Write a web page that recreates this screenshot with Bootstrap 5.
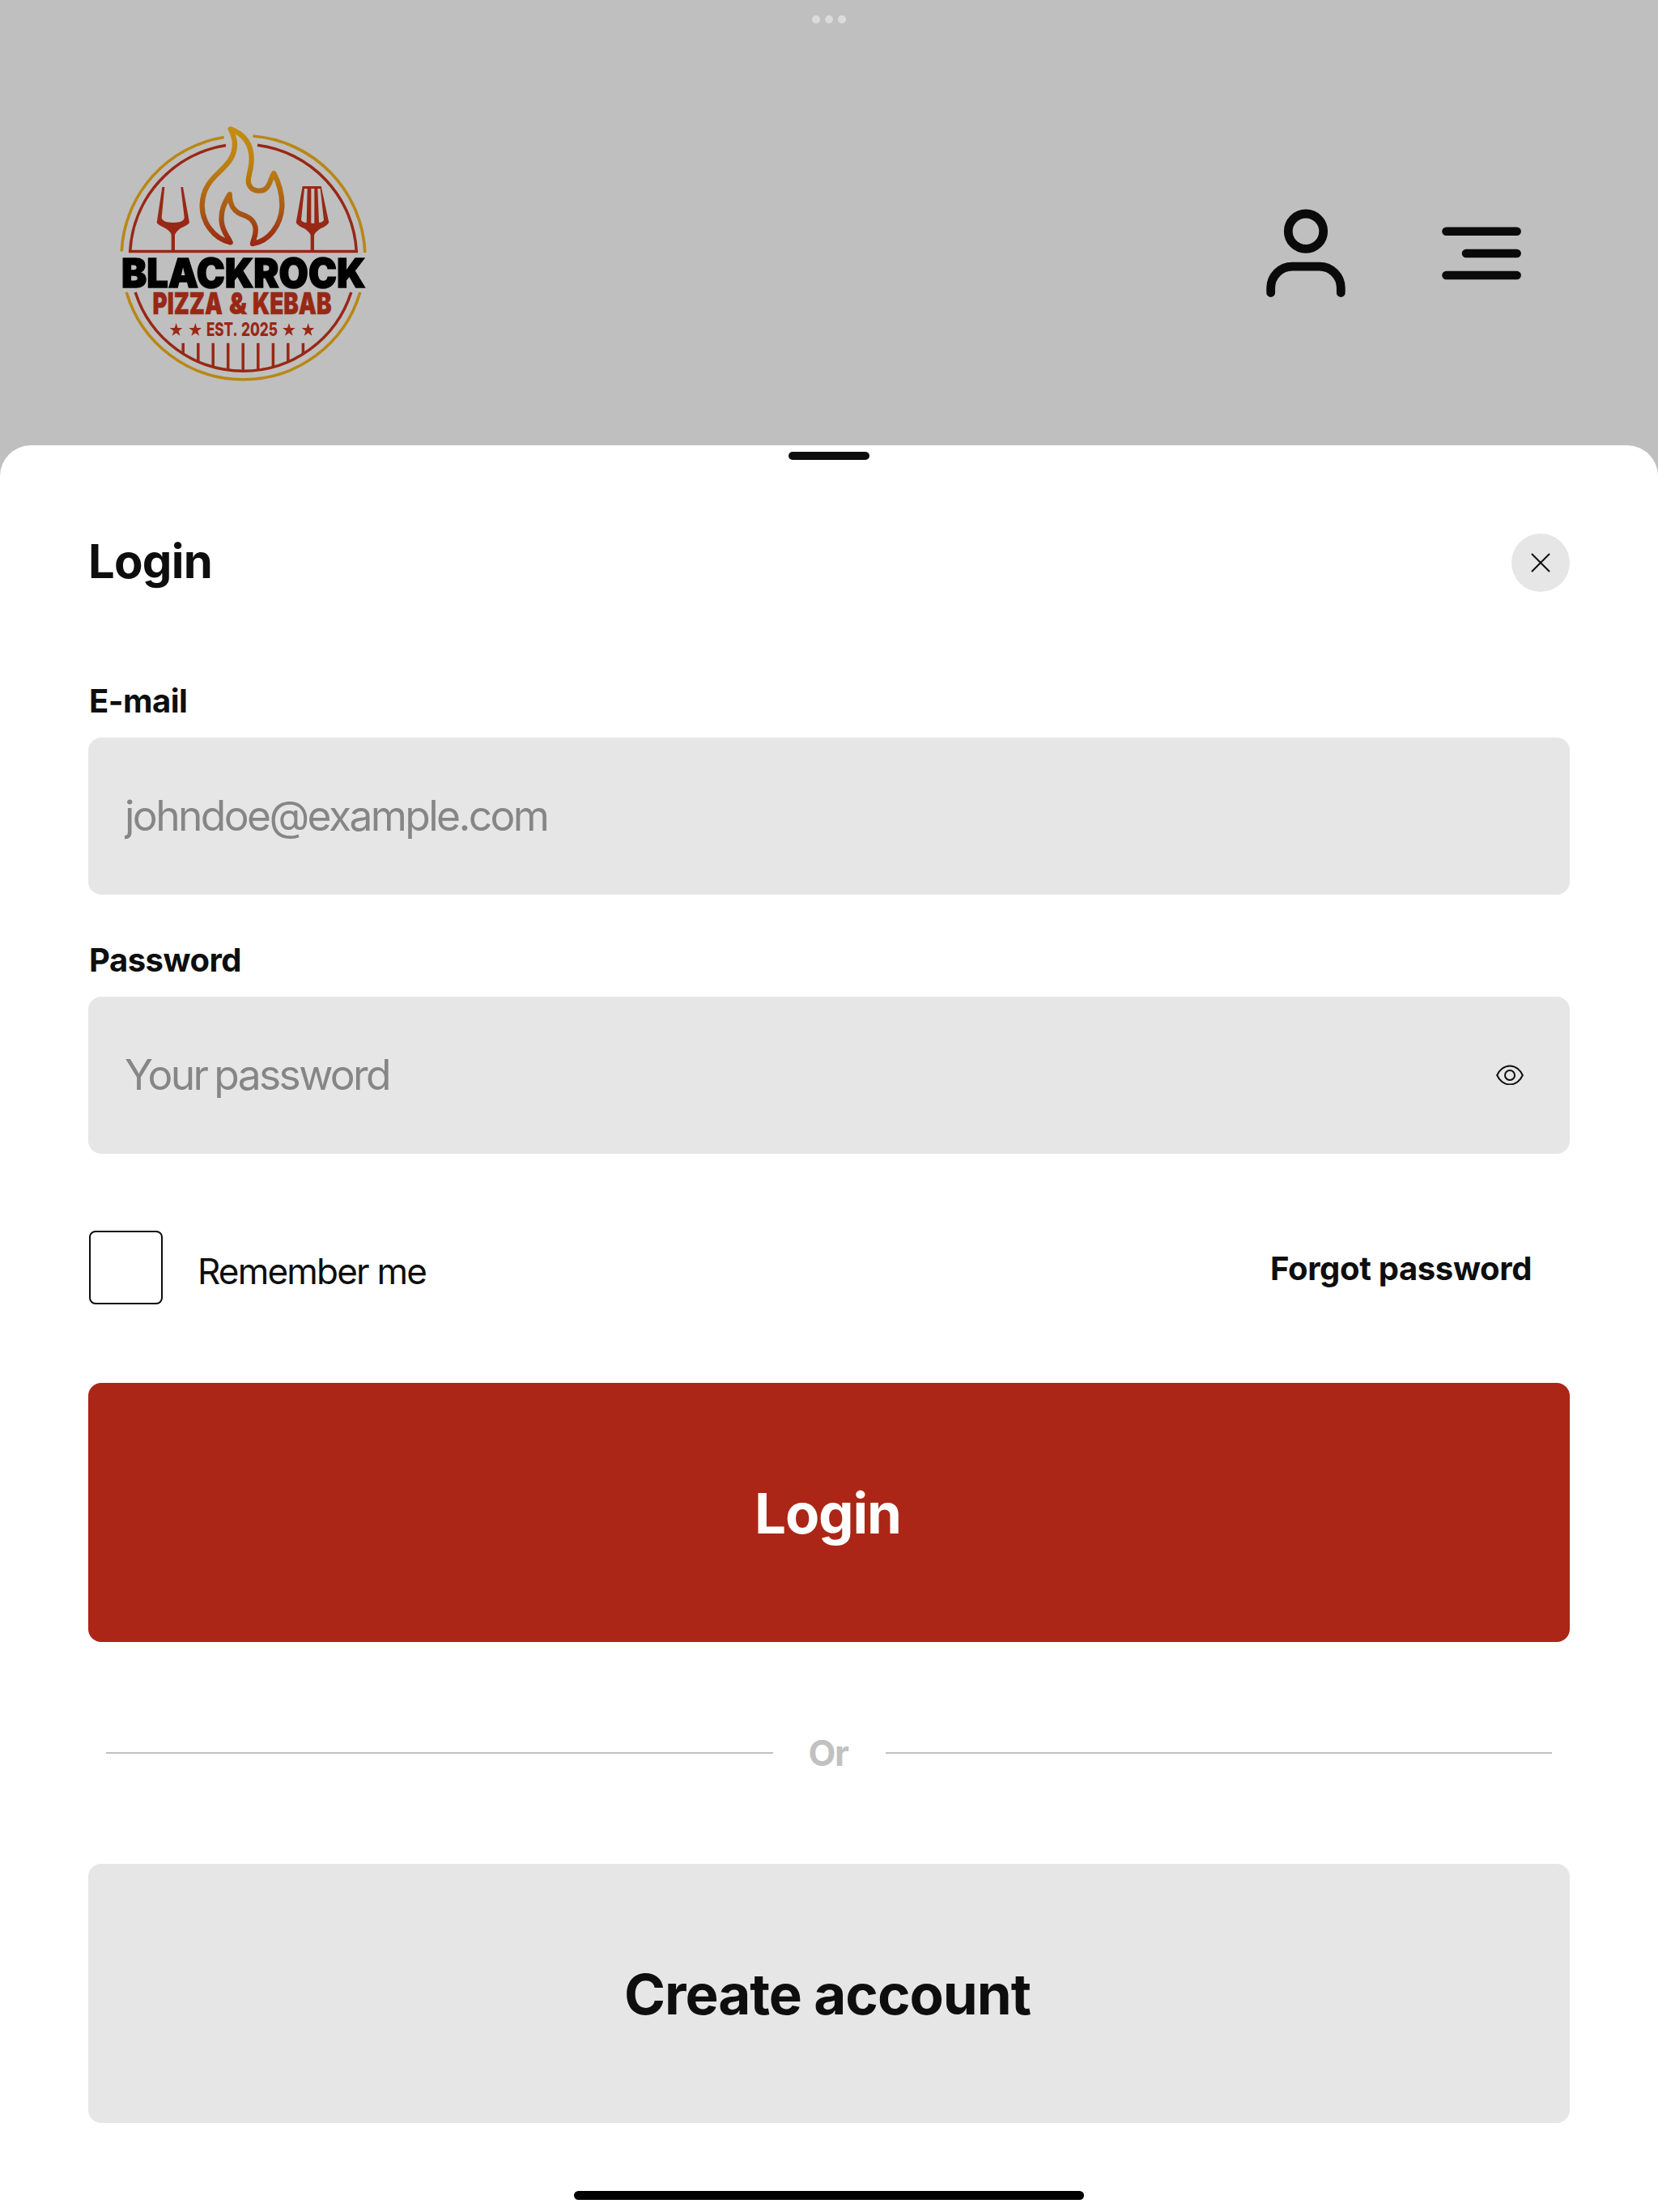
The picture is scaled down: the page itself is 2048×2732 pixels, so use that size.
<!DOCTYPE html>
<html lang="en">
<head>
    <meta charset="UTF-8">
    <title>Login</title>
    <link href="https://cdn.jsdelivr.net/npm/bootstrap@5.3.3/dist/css/bootstrap.min.css" rel="stylesheet">
    <style>
        body {
            font-family: Inter, "Liberation Sans", sans-serif;
            color: #0e0e0e;
            background: #bfbfbf;
            height: 2732px;
            overflow: hidden;
        }

        /* Dimmed page behind the sheet */
        .page-top {
            height: 550px;
            padding: 19px 164px 0 130px;
        }
        .window-dots {
            gap: 6px;
            height: 10px;
            margin-right: -34px;
        }
        .window-dots span {
            width: 10px;
            height: 10px;
            background: #dbdbdb;
        }
        .site-bar {
            padding-top: 111px;
        }
        .header-icons {
            gap: 110px;
            padding-top: 108px;
        }

        /* Bottom sheet */
        .login-sheet {
            height: 2182px;
            border-radius: 38px 38px 0 0;
            padding: 8px 109px 15px;
        }
        .drag-handle {
            width: 100px;
            height: 10px;
            background: #0e0e0e;
        }
        .sheet-head {
            height: 72px;
            margin-top: 91px;
        }
        .sheet-title {
            font-size: 58px;
            line-height: 68px;
            letter-spacing: -0.75px;
            padding-bottom: 4px;
        }
        .close-btn {
            width: 72px;
            height: 72px;
            background: #e6e6e6;
        }
        #loginForm {
            margin-top: 115px;
        }
        .field-group + .field-group {
            margin-top: 60px;
        }
        .field-label {
            font-size: 40px;
            line-height: 40px;
            letter-spacing: -0.5px;
            padding: 0 0 25px 1px;
        }
        .field-group + .field-group .field-label {
            margin-top: 1px;
        }
        .field-box {
            height: 194px;
            background: #e6e6e6;
            border-radius: 16px;
            padding: 0 57px 2px 45px;
        }
        .field-box .form-control {
            font-size: 51.5px;
            line-height: 70px;
            letter-spacing: -2.6px;
            word-spacing: -3px;
        }
        .field-box .form-control::placeholder {
            color: #868686;
            opacity: 1;
        }
        .options-row {
            height: 91px;
            margin-top: 95px;
            padding: 0 47px 0 1px;
        }
        .options-row .form-check-input {
            width: 91px;
            height: 91px;
            border: 2px solid #0e0e0e;
            border-radius: 8px;
        }
        .remember-label {
            font-size: 44px;
            letter-spacing: -1.8px;
            padding: 9px 0 0 43px;
        }
        .forgot-link {
            font-size: 40px;
            letter-spacing: -0.35px;
            padding-top: 2px;
            color: #0e0e0e;
        }
        .big-btn {
            height: 320px;
            border-radius: 16px;
            font-size: 69px;
            line-height: 80px;
        }
        .btn-brand {
            background: #ab2616;
            color: #fff;
            letter-spacing: -1.15px;
            margin-top: 97px;
            padding: 2px 3px 0 0;
        }
        .btn-plain {
            background: #e6e6e6;
            color: #0e0e0e;
            letter-spacing: -1px;
            padding: 2px 4px 0 0;
        }
        .or-row {
            height: 274px;
            padding: 0 22px;
            color: #c1c1c1;
            font-size: 44px;
            letter-spacing: -1.5px;
        }
        .or-row span {
            width: 139px;
            padding-right: 2px;
        }
        .or-line {
            height: 2px;
            background: #c1c1c1;
        }
        .home-bar {
            width: 630px;
            height: 11px;
            background: #000;
        }
    </style>
</head>
<body>

<header class="page-top">
    <div class="window-dots d-flex justify-content-center">
        <span class="rounded-circle"></span>
        <span class="rounded-circle"></span>
        <span class="rounded-circle"></span>
    </div>
    <div class="site-bar d-flex justify-content-between">
        <svg width="340" height="340" viewBox="0 0 340 340">
            <defs>
                <linearGradient id="flame" gradientUnits="userSpaceOnUse" x1="0" y1="50" x2="0" y2="490">
                    <stop offset="0" stop-color="#c38e10"/>
                    <stop offset="0.35" stop-color="#bc7f11"/>
                    <stop offset="0.7" stop-color="#a95a16"/>
                    <stop offset="1" stop-color="#982513"/>
                </linearGradient>
            </defs>
            <!-- rings -->
            <g fill="none" stroke="#b98714" stroke-width="3.6">
                <path d="M20.2,170.5 A150.5,150.5 0 0 1 146.7,29.5"/>
                <path d="M182.5,28 A150.5,150.5 0 0 1 320.8,172"/>
                <path d="M26.2,221 A150.5,150.5 0 0 0 314.8,221"/>
            </g>
            <g fill="none" stroke="#982815" stroke-width="3.5">
                <path d="M149,39.6 A140,140 0 0 0 30.7,170.4 H310.3 A140,140 0 0 0 188,39.3"/>
                <path d="M37.2,221 A140,140 0 0 0 303.8,221"/>
                <path d="M96.2,283.7 V297 M114.8,283.7 V306 M133.2,283.7 V313 M151.7,283.7 V317 M170.2,283.7 V318 M188.8,283.7 V317 M207.4,283.7 V313 M225.8,283.7 V306 M244.4,283.7 V297"/>
            </g>
            <!-- flame, fork and spatula -->
            <g transform="scale(.33333)">
                <path fill="none" stroke="url(#flame)" stroke-width="19" stroke-linejoin="round" d="M464,58 C512,76 542,112 542,170 C542,215 524,240 532,262 C542,292 588,296 604,268 C615,250 615,235 625,222 C645,260 656,305 655,345 C652,415 605,475 546,483 C548,465 562,450 556,420 C546,385 520,380 500,372 C475,360 462,340 461,300 C440,335 428,360 431,400 C434,440 455,455 464,478 C400,465 358,400 359,340 C362,220 478,215 480,115 C480,90 472,75 464,58 Z"/>
                <g fill="#982815">
                    <path d="M211,273 L191,405 Q195,413 222,425 Q243,438 245,450 V510 H258 V450 Q262,438 280,425 Q308,413 312,405 L288,273 H280 L293,385 Q293,405 252,405 Q210,405 209,385 L220,273 Z"/>
                    <path fill-rule="evenodd" d="M731,270 H800 L829,405 Q820,418 798,427 Q778,440 774,452 V510 H761 V452 Q757,440 738,427 Q715,418 707,405 Z M738,279 L726,395 Q730,404 746,405 L749,279 Z M763,279 V407 H775 V279 Z M787,279 L792,405 Q806,404 810,395 L797,279 Z"/>
                    <path id="star" d="M263,777 L268.5,795 H286 L272,806 L277,824 L263,813.5 L248,824 L253.5,806 L239,795 H257 Z"/>
                    <use href="#star" x="71"/>
                    <use href="#star" x="418"/>
                    <use href="#star" x="489"/>
                </g>
            </g>
            <g font-family="Inter, sans-serif" font-weight="900">
                <text x="20" y="215" font-size="49.5" textLength="301.5" lengthAdjust="spacingAndGlyphs" stroke="#000" stroke-width="1.4">BLACKROCK</text>
                <g fill="#982815" stroke="#982815" stroke-width=".5" font-size="37.5">
                    <text x="58.5" y="248.3" textLength="86.5" lengthAdjust="spacingAndGlyphs">PIZZA</text>
                    <text x="153" y="248.3" textLength="22" lengthAdjust="spacingAndGlyphs">&amp;</text>
                    <text x="182" y="248.3" textLength="97.5" lengthAdjust="spacingAndGlyphs">KEBAB</text>
                </g>
                <g fill="#982815" font-size="23.5" font-weight="800">
                    <text x="125" y="275" textLength="38.5" lengthAdjust="spacingAndGlyphs">EST.</text>
                    <text x="168" y="275" textLength="45" lengthAdjust="spacingAndGlyphs">2025</text>
                </g>
            </g>
        </svg>
        <div class="header-icons d-flex">
            <svg width="98" height="120" viewBox="1564 248 98 120" fill="none" stroke="#0a0a0a" stroke-width="10.8" stroke-linecap="round">
                <circle cx="1613" cy="285.7" r="21.7"/>
                <path d="M1569.7,361.5 V355.5 A26.5,26.5 0 0 1 1596.2,329.2 H1629.8 A26.5,26.5 0 0 1 1656.3,355.5 V361.5"/>
            </svg>
            <svg width="112" height="120" viewBox="1772 248 112 120" stroke="#0a0a0a" stroke-width="10.6" stroke-linecap="round">
                <path d="M1786.5,285.8 H1873.6 M1811,313 H1873.6 M1786.5,340 H1873.6"/>
            </svg>
        </div>
    </div>
</header>

<main class="login-sheet bg-white d-flex flex-column">
    <div class="drag-handle rounded-pill mx-auto"></div>

    <div class="sheet-head d-flex justify-content-between align-items-center">
        <h2 class="sheet-title fw-bold m-0">Login</h2>
        <button type="button" class="close-btn btn rounded-circle border-0 p-0 d-flex align-items-center justify-content-center" aria-label="Close">
            <svg width="24" height="24" viewBox="0 0 24 24" stroke="#0e0e0e" stroke-width="2" stroke-linecap="round">
                <path d="M1.5,1.5 L22.5,22.5 M22.5,1.5 L1.5,22.5"/>
            </svg>
        </button>
    </div>

    <form id="loginForm" class="d-flex flex-column">
        <div class="field-group">
            <label for="email" class="field-label fw-bold d-block">E-mail</label>
            <div class="field-box d-flex align-items-center">
                <input type="email" id="email" class="form-control border-0 bg-transparent p-0 shadow-none" placeholder="johndoe@example.com">
            </div>
        </div>
        <div class="field-group">
            <label for="password" class="field-label fw-bold d-block">Password</label>
            <div class="field-box d-flex align-items-center">
                <input type="password" id="password" class="form-control border-0 bg-transparent p-0 shadow-none" placeholder="Your password">
                <svg id="togglePassword" class="flex-shrink-0" width="34" height="26" viewBox="0 0 34 26" fill="none" stroke="#0e0e0e" stroke-width="2">
                    <path d="M1.2,14 C4,7.5 10,2.5 17,2.5 S30,7.5 32.8,14 C30,20.5 24,25.5 17,25.5 S4,20.5 1.2,14 Z"/>
                    <circle cx="17" cy="14" r="6"/>
                </svg>
            </div>
        </div>

        <div class="options-row d-flex justify-content-between align-items-center">
            <div class="d-flex align-items-center">
                <input type="checkbox" id="remember" class="form-check-input m-0">
                <label for="remember" class="remember-label">Remember me</label>
            </div>
            <a href="#" class="forgot-link fw-bold text-decoration-none">Forgot password</a>
        </div>

        <button type="submit" class="btn big-btn btn-brand w-100 border-0 fw-bold">Login</button>

        <div class="or-row d-flex align-items-center">
            <div class="or-line flex-fill"></div>
            <span class="text-center fw-bold">Or</span>
            <div class="or-line flex-fill"></div>
        </div>

        <button type="button" class="btn big-btn btn-plain w-100 border-0 fw-bold">Create account</button>
    </form>

    <div class="home-bar rounded-pill mx-auto mt-auto"></div>
</main>

<script src="https://cdn.jsdelivr.net/npm/bootstrap@5.3.3/dist/js/bootstrap.bundle.min.js"></script>
<script>
    // Show or hide the typed password
    const passwordInput = document.getElementById('password');
    document.getElementById('togglePassword').addEventListener('click', () => {
        passwordInput.type = passwordInput.type === 'password' ? 'text' : 'password';
    });
</script>
</body>
</html>
